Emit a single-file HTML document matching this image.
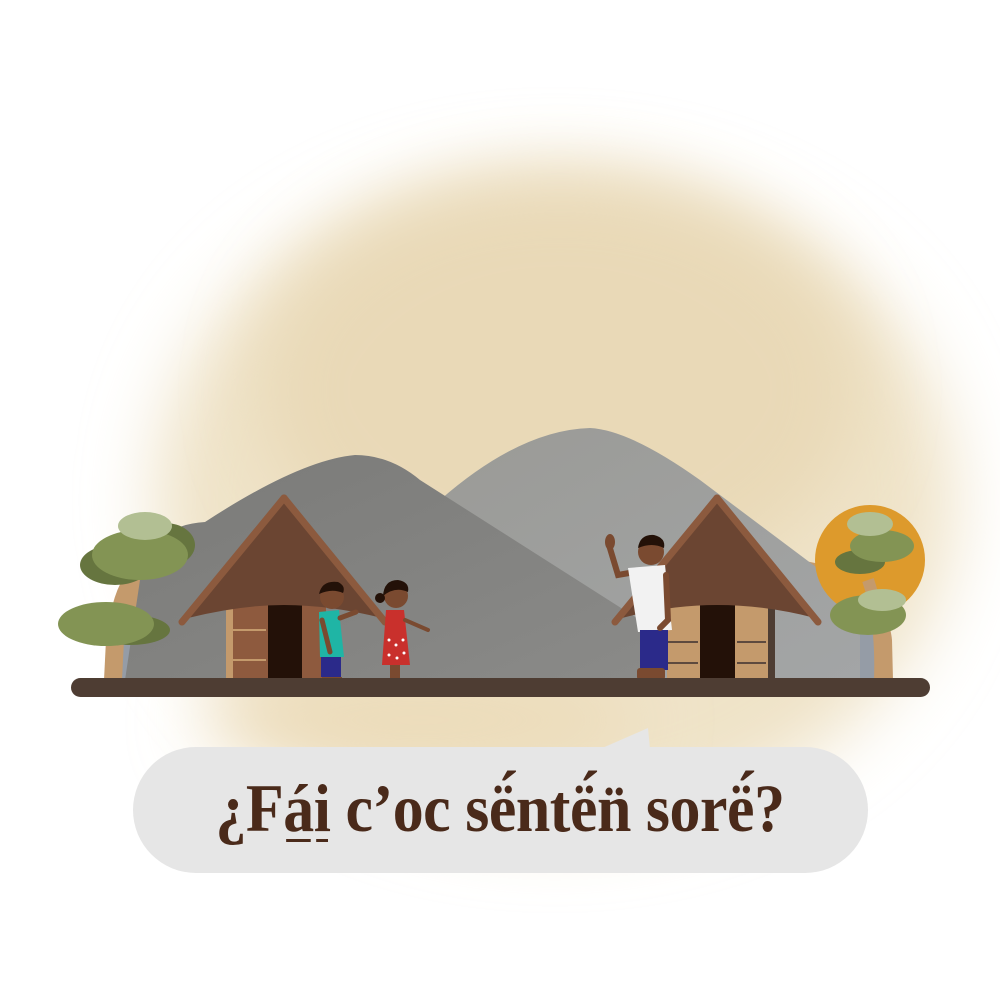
<!DOCTYPE html>
<html><head><meta charset="utf-8"><style>
html,body{margin:0;padding:0;background:#fff;width:1000px;height:1000px;overflow:hidden}
svg{position:absolute;left:0;top:0}
.bub{position:absolute;left:133px;top:747px;width:735px;height:126px;background:#e6e6e6;border-radius:63px}
.txt{position:absolute;left:0;top:768px;width:1000px;text-align:center;font-family:"Liberation Serif",serif;font-weight:bold;font-size:68px;line-height:80px;color:#4a2a1a;letter-spacing:-0.5px;transform:scaleX(0.91);transform-origin:500px 0;white-space:nowrap}
.u{display:inline-block;position:relative}
.u::after{content:"";position:absolute;left:3px;right:3px;bottom:6px;height:3px;background:#4a2a1a}
</style></head><body>
<svg width="1000" height="1000" viewBox="0 0 1000 1000">
<defs>
<filter id="bl" x="-30%" y="-30%" width="160%" height="160%"><feGaussianBlur stdDeviation="35"/></filter>
<linearGradient id="lm" x1="0" y1="0" x2="1" y2="1"><stop offset="0" stop-color="#7a7a78"/><stop offset="1" stop-color="#8a8a88"/></linearGradient>
<linearGradient id="rm" x1="0" y1="0" x2="1" y2="1"><stop offset="0" stop-color="#9a9a96"/><stop offset="1" stop-color="#a3a5a6"/></linearGradient>
</defs>
<ellipse cx="555" cy="500" rx="400" ry="330" fill="#efe3c8" filter="url(#bl)"/>
<ellipse cx="560" cy="390" rx="300" ry="210" fill="#e9d9b7" filter="url(#bl)"/>
<ellipse cx="420" cy="720" rx="220" ry="50" fill="#ecdcba" filter="url(#bl)"/>
<!-- backdrop arch -->
<path d="M104 680 L106 640 Q112 590 150 565 L300 540 L700 540 L850 570 Q888 600 892 640 L893 680 Z" fill="#c49a6c"/>
<path d="M122 680 L124 640 Q130 600 165 578 L300 555 L700 555 L840 585 Q872 610 875 640 L876 680 Z" fill="#959ca6"/>
<!-- mountains -->
<path d="M440 500 Q520 430 590 428 Q630 430 700 480 L860 600 L860 680 L420 680 Z" fill="url(#rm)"/>
<path d="M140 580 Q150 525 205 522 Q300 460 355 455 Q390 455 420 480 L640 620 L640 680 L125 680 Z" fill="url(#lm)"/>
<!-- trees left -->
<path d="M112 680 Q112 590 140 570" stroke="#c49a6c" stroke-width="14" fill="none"/>
<ellipse cx="165" cy="545" rx="30" ry="22" fill="#66753f"/>
<ellipse cx="115" cy="565" rx="35" ry="20" fill="#66753f"/>
<ellipse cx="140" cy="555" rx="48" ry="25" fill="#839454"/>
<ellipse cx="145" cy="526" rx="27" ry="14" fill="#b2bf93"/>
<ellipse cx="130" cy="630" rx="40" ry="15" fill="#66753f"/>
<ellipse cx="106" cy="624" rx="48" ry="22" fill="#839454"/>
<!-- right tree -->
<ellipse cx="870" cy="560" rx="55" ry="55" fill="#dd9a2c"/>
<path d="M880 680 Q882 620 868 580" stroke="#c49a6c" stroke-width="12" fill="none"/>
<ellipse cx="860" cy="562" rx="25" ry="12" fill="#66753f"/>
<ellipse cx="882" cy="546" rx="32" ry="16" fill="#839454"/>
<ellipse cx="870" cy="524" rx="23" ry="12" fill="#b2bf93"/>
<ellipse cx="868" cy="615" rx="38" ry="20" fill="#839454"/>
<ellipse cx="882" cy="600" rx="24" ry="11" fill="#b2bf93"/>
<!-- left hut -->
<rect x="226" y="600" width="100" height="80" fill="#c49a6c"/>
<rect x="233" y="600" width="35" height="80" fill="#8e5a3e"/>
<rect x="268" y="600" width="34" height="80" fill="#231108"/>
<rect x="302" y="600" width="24" height="80" fill="#8e5a3e"/>
<line x1="233" y1="630" x2="266" y2="630" stroke="#c49a6c" stroke-width="2"/><line x1="233" y1="660" x2="266" y2="660" stroke="#c49a6c" stroke-width="2"/>
<path d="M284 500 L188 618 Q240 605 284 605 Q330 605 382 618 Z" fill="#6b4532"/>
<path d="M284 498 L182 622" stroke="#8c5a3e" stroke-width="7" stroke-linecap="round"/>
<path d="M284 498 L385 622" stroke="#8c5a3e" stroke-width="7" stroke-linecap="round"/>
<!-- right hut -->
<rect x="667" y="600" width="108" height="80" fill="#c49a6c"/>
<rect x="700" y="600" width="35" height="80" fill="#231108"/>
<rect x="768" y="600" width="7" height="80" fill="#4e3d33"/>
<line x1="668" y1="642" x2="698" y2="642" stroke="#5e4a3e" stroke-width="2"/><line x1="737" y1="642" x2="766" y2="642" stroke="#5e4a3e" stroke-width="2"/>
<line x1="668" y1="663" x2="698" y2="663" stroke="#5e4a3e" stroke-width="2"/><line x1="737" y1="663" x2="766" y2="663" stroke="#5e4a3e" stroke-width="2"/>
<path d="M717 500 L622 618 Q670 605 717 605 Q765 605 815 618 Z" fill="#6b4532"/>
<path d="M717 498 L615 622" stroke="#8c5a3e" stroke-width="7" stroke-linecap="round"/>
<path d="M717 498 L818 622" stroke="#8c5a3e" stroke-width="7" stroke-linecap="round"/>
<!-- boy -->
<rect x="321" y="655" width="20" height="22" fill="#2b2a8a"/>
<path d="M319 612 L339 610 L344 657 L320 657Z" fill="#1fb5a5"/>
<path d="M340 618 L356 612" stroke="#7a4a30" stroke-width="5" stroke-linecap="round"/>
<path d="M322 620 L330 652" stroke="#7a4a30" stroke-width="5" stroke-linecap="round"/>
<circle cx="332" cy="597" r="12" fill="#7a4a30"/><path d="M319 594 Q322 580 338 582 Q346 586 343 593 Q332 588 319 594Z" fill="#231108"/>
<rect x="322" y="677" width="20" height="4" fill="#7a4a30"/>
<!-- girl -->
<path d="M386 610 L404 610 L410 665 L382 665Z" fill="#c9302c"/>
<g fill="#fff"><circle cx="389" cy="640" r="1.5"/><circle cx="396" cy="645" r="1.5"/><circle cx="403" cy="640" r="1.5"/><circle cx="389" cy="655" r="1.5"/><circle cx="397" cy="658" r="1.5"/><circle cx="404" cy="653" r="1.5"/></g>
<path d="M405 620 L428 630" stroke="#7a4a30" stroke-width="4" stroke-linecap="round"/>
<rect x="390" y="665" width="10" height="16" fill="#7a4a30"/>
<circle cx="396" cy="596" r="12" fill="#7a4a30"/><path d="M383 596 Q384 580 398 580 Q410 582 408 592 Q395 586 383 596Z" fill="#231108"/><circle cx="380" cy="598" r="5" fill="#231108"/>
<!-- man -->
<path d="M609 545 L618 575 L635 572" stroke="#7a4a30" stroke-width="6" fill="none" stroke-linecap="round"/>
<ellipse cx="610" cy="542" rx="5" ry="8" fill="#7a4a30"/>
<path d="M628 568 L665 565 L672 630 L638 632Z" fill="#f2f2f2"/>
<rect x="640" y="630" width="28" height="40" fill="#2b2a8a"/>
<path d="M666 575 L668 620 L660 628" stroke="#7a4a30" stroke-width="6" fill="none" stroke-linecap="round"/>
<rect x="637" y="668" width="28" height="12" rx="3" fill="#7a4a30"/>
<circle cx="651" cy="552" r="13" fill="#7a4a30"/><path d="M638 548 Q640 534 654 535 Q666 538 664 548 Q652 542 638 548Z" fill="#231108"/>
<!-- ground -->
<rect x="71" y="678" width="859" height="19" rx="9.5" fill="#4e3d33"/>
<!-- bubble tail -->
<path d="M600 749 L648 728 L650 749Z" fill="#e6e6e6"/>
</svg>
<div class="bub"></div>
<div class="txt">¿F<span class="u">á</span><span class="u">i</span> c’oc së́ntë́n̈ sorë́?</div>
</body></html>
